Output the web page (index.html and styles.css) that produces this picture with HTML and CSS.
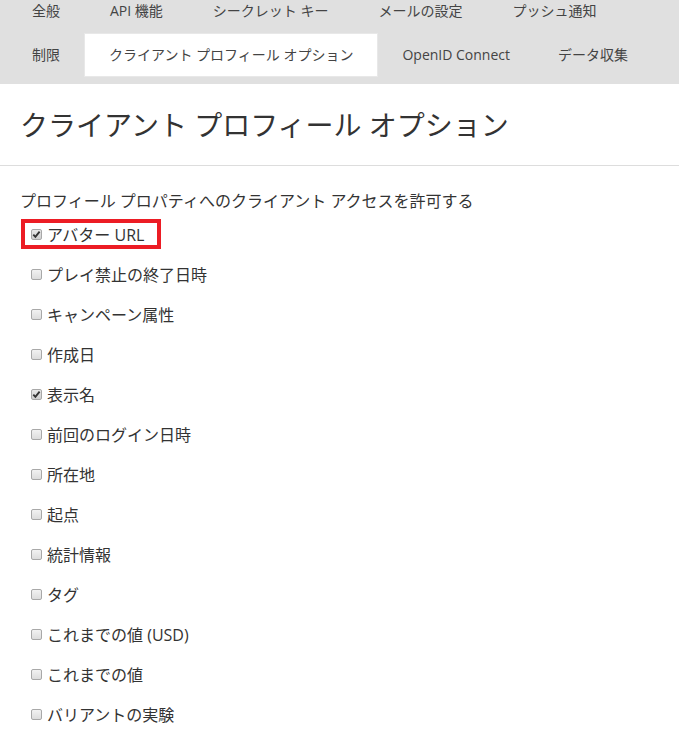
FILE: index.html
```html
<!DOCTYPE html>
<html lang="ja">
<head>
  <meta charset="UTF-8">
  <title>クライアント プロフィール オプション</title>
  <link rel="stylesheet" href="styles.css">
</head>
<body>

<nav class="tabs">
  <div class="tab-row">
    <a class="tab">全般</a>
    <a class="tab">API 機能</a>
    <a class="tab">シークレット キー</a>
    <a class="tab">メールの設定</a>
    <a class="tab">プッシュ通知</a>
  </div>
  <div class="tab-row">
    <a class="tab">制限</a>
    <a class="tab active">クライアント プロフィール オプション</a>
    <a class="tab">OpenID Connect</a>
    <a class="tab">データ収集</a>
  </div>
</nav>

<header class="page-header">
  <h1>クライアント プロフィール オプション</h1>
</header>

<section class="options">
  <p class="options-title">プロフィール プロパティへのクライアント アクセスを許可する</p>

  <div class="option">
    <label class="highlight"><span class="box checked"><svg viewBox="0 0 11 11" width="11" height="11"><path d="M2.3 5.6 L4.4 7.8 L8.6 2.6" fill="none" stroke="#333" stroke-width="1.9"/></svg></span>アバター URL</label>
  </div>
  <div class="option"><label><span class="box"></span>プレイ禁止の終了日時</label></div>
  <div class="option"><label><span class="box"></span>キャンペーン属性</label></div>
  <div class="option"><label><span class="box"></span>作成日</label></div>
  <div class="option">
    <label><span class="box checked"><svg viewBox="0 0 11 11" width="11" height="11"><path d="M2.3 5.6 L4.4 7.8 L8.6 2.6" fill="none" stroke="#333" stroke-width="1.9"/></svg></span>表示名</label>
  </div>
  <div class="option"><label><span class="box"></span>前回のログイン日時</label></div>
  <div class="option"><label><span class="box"></span>所在地</label></div>
  <div class="option"><label><span class="box"></span>起点</label></div>
  <div class="option"><label><span class="box"></span>統計情報</label></div>
  <div class="option"><label><span class="box"></span>タグ</label></div>
  <div class="option"><label><span class="box"></span>これまでの値 (USD)</label></div>
  <div class="option"><label><span class="box"></span>これまでの値</label></div>
  <div class="option"><label><span class="box"></span>バリアントの実験</label></div>
</section>

</body>
</html>
```

FILE: styles.css
```css
body { margin: 0; background: #fff; color: #333; font-family: "Open Sans", "Noto Sans CJK JP", sans-serif; }

.tabs { background: #e0e0e0; margin-top: -11px; padding: 0 0 7px 7px; }
.tab-row { display: flex; }
.tab { display: block; height: 44px; line-height: 44px; padding: 0 25px; font-size: 14px; color: #444; box-sizing: border-box; white-space: nowrap; }
.tab-row + .tab-row .tab { padding: 0 24px; }
.tab-row + .tab-row .tab:first-child { padding-left: 25px; }
.tab-row + .tab-row .tab.active { background: #fff; border: 1px solid #e8e8e8; line-height: 42px; }

.page-header { padding: 21px 20px 20px; border-bottom: 1px solid #ddd; }
.page-header h1 { margin: 0; font-size: 28px; line-height: 40px; font-weight: normal; color: #333; }

.options { padding: 23px 20px 0; }
.options-title { margin: 0 0 1px; font-size: 16px; line-height: 24px; }

.option { display: flex; align-items: center; height: 40px; padding-left: 11px; font-size: 16px; }
.option label { display: flex; align-items: center; gap: 5px; }
.option label.highlight { border: 4px solid #ec1c24; height: 22px; padding: 0 13px 0 6px; margin-left: -10px; }

.box { display: block; width: 11px; height: 11px; box-sizing: border-box; border: 1px solid #a8a8a8; border-radius: 2px; background: linear-gradient(#f2f2f2, #dcdcdc); position: relative; }
.box svg { position: absolute; left: -1px; top: -1px; }
.box.checked { background: linear-gradient(#e8e8e8, #cfcfcf); }
```
